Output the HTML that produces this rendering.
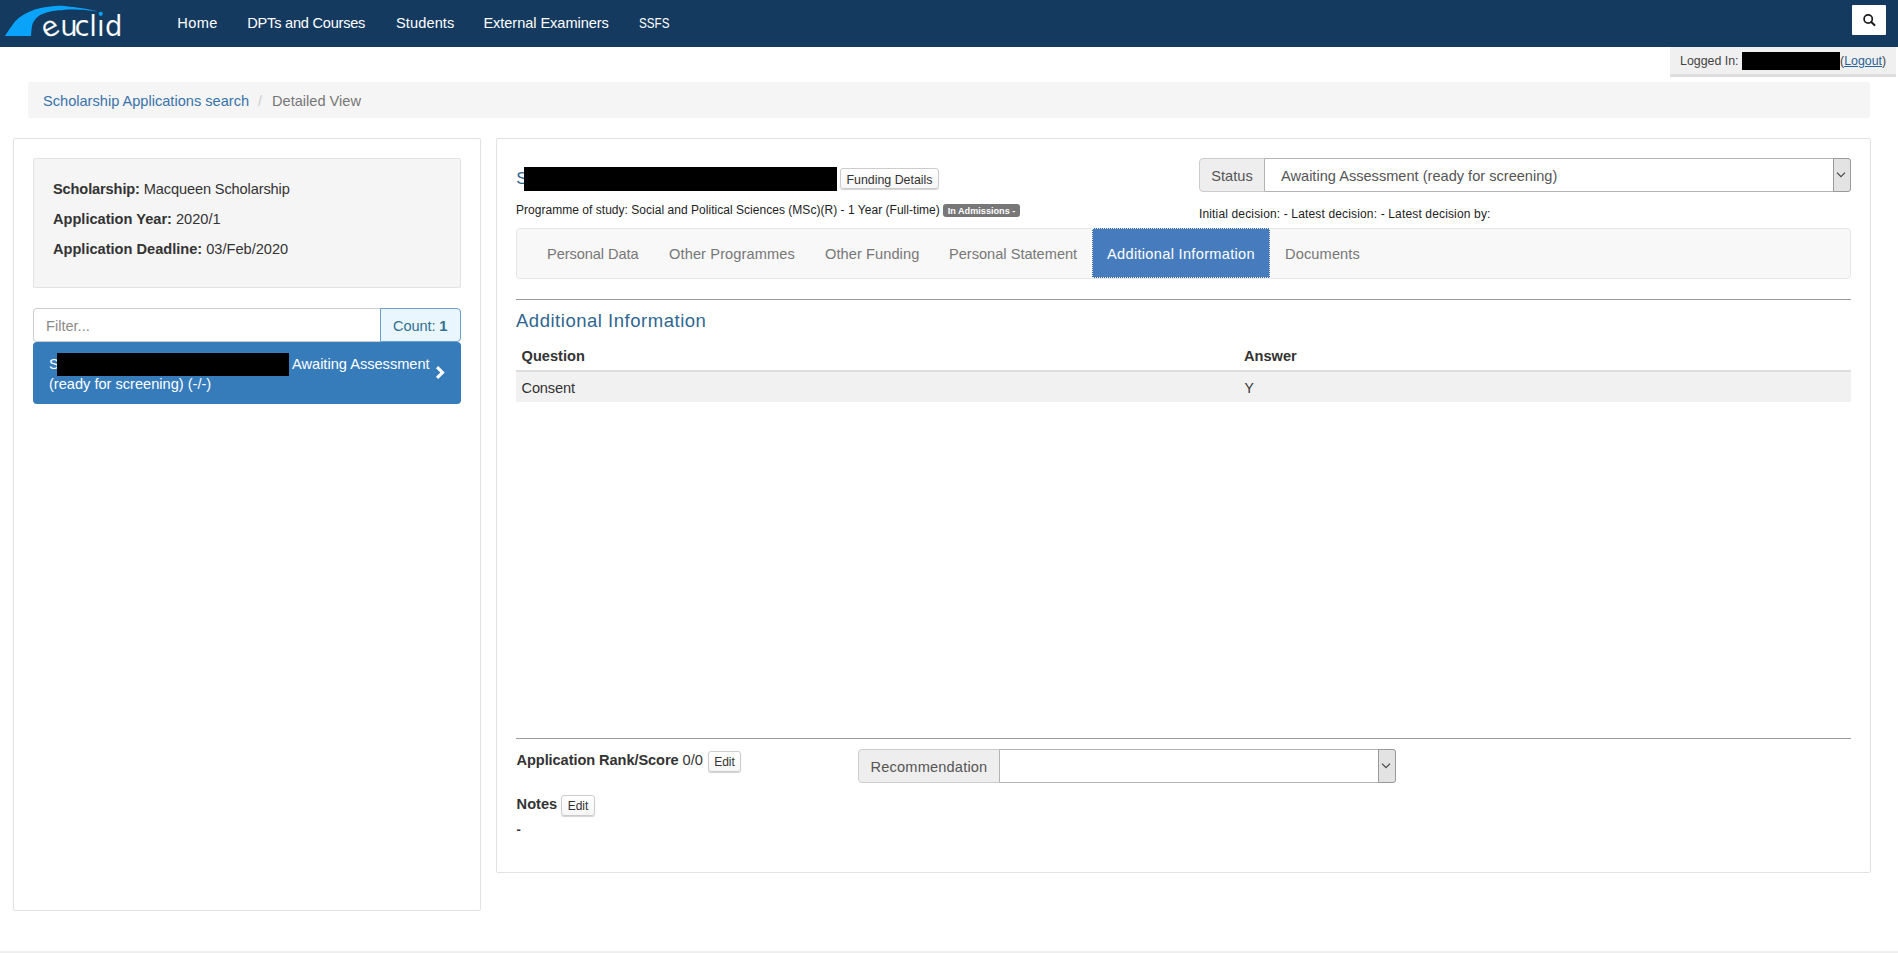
<!DOCTYPE html>
<html lang="en">
<head>
<meta charset="utf-8">
<title>Scholarship Applications - Detailed View</title>
<style>
*{box-sizing:border-box;margin:0;padding:0}
html,body{width:1898px;height:953px;overflow:hidden;background:#fff}
body{font-family:"Liberation Sans",Arial,sans-serif;font-size:14px;color:#333;position:relative}
.abs{position:absolute;white-space:nowrap}
.t{position:absolute;white-space:nowrap;line-height:20px}
b{font-weight:bold}
/* navbar */
#nav{left:0;top:0;width:1898px;height:47px;background:#153a5f}
.nl{color:#fff;font-size:14.6px;top:13px}
#srch{left:1852px;top:5px;width:34px;height:30px;background:#fff;border-radius:1px}
/* logged in */
#logbox{left:1670px;top:47px;width:226px;height:30px;background:#f0f0f0;border-bottom:3px solid #dedede}
/* breadcrumb */
#crumb{left:28px;top:82px;width:1842px;height:35.5px;background:#f5f5f5;border-radius:2px}
/* panels */
#lpanel{left:13px;top:138px;width:468px;height:773px;border:1px solid #e2e2e2;border-radius:2px;background:#fff}
#rpanel{left:496px;top:138px;width:1375px;height:735px;border:1px solid #e2e2e2;border-radius:2px;background:#fff}
#well{left:33px;top:158px;width:428px;height:130px;background:#f5f5f5;border:1px solid #e3e3e3;border-radius:2px}
#filter{left:33px;top:308px;width:348px;height:34px;border:1px solid #ccc;border-radius:4px 0 0 4px;background:#fff}
#count{left:380px;top:308px;width:81px;height:34px;border:1px solid #6a9fd0;border-radius:0 4px 4px 0;background:#eaf6fd}
#item{left:33px;top:341.5px;width:428px;height:62.5px;background:#367bba;border-radius:4px}
.black{background:#000}
.btnx{border:1px solid #ccc;border-radius:3px;background:linear-gradient(#fff,#f6f6f6);box-shadow:0 1px 1px rgba(0,0,0,.18);font-size:12px;color:#333;text-align:center}
.addon{background:#eee;border:1px solid #ccc;border-radius:4px 0 0 4px;color:#555;text-align:center}
.sel{background:#fff;border:1px solid #b4b4b4;border-radius:0 4px 4px 0}
.arrow{background:#e3e3e3;border:1px solid #999;border-radius:0 3px 3px 0}
#tabs{left:516px;top:228px;width:1335px;height:51px;background:#f8f8f8;border:1px solid #e7e7e7;border-radius:4px}
.tab{color:#777;font-size:14.6px;top:244px}
#act{left:1092px;top:228px;width:178px;height:50px;background:#467cbd;outline:1px dotted #e8f0fa;outline-offset:-1px;border:1px solid #3a66a0}
.hr{height:1px;background:#9b9b9b;left:516px;width:1335px}
</style>
</head>
<body>
<!-- NAVBAR -->
<div class="abs" id="nav"></div>
<svg class="abs" style="left:0;top:0" width="140" height="47" viewBox="0 0 140 47">
  <path d="M5.00 35.90 C5.92 34.53 8.53 30.40 10.50 27.70 C12.47 25.00 14.35 22.02 16.80 19.70 C19.25 17.38 22.40 15.40 25.20 13.80 C28.00 12.20 30.80 11.10 33.60 10.10 C36.40 9.10 38.85 8.45 42.00 7.80 C45.15 7.15 49.50 6.55 52.50 6.20 C55.50 5.85 57.33 5.67 60.00 5.70 C62.67 5.73 66.00 6.15 68.50 6.40 C71.00 6.65 72.72 6.90 75.00 7.20 C77.28 7.50 79.87 7.82 82.20 8.20 C84.53 8.58 86.72 9.05 89.00 9.50 C91.28 9.95 94.35 10.53 95.90 10.90 C97.45 11.27 97.90 11.57 98.30 11.70 L98.30 11.70 C96.75 11.52 91.72 10.92 89.00 10.60 C86.28 10.28 84.28 10.00 82.00 9.80 C79.72 9.60 77.63 9.43 75.30 9.40 C72.97 9.37 69.88 9.52 68.00 9.60 C66.12 9.68 65.55 9.78 64.00 9.90 C62.45 10.02 60.97 10.03 58.70 10.30 C56.43 10.57 53.18 10.83 50.40 11.50 C47.62 12.17 44.10 13.42 42.00 14.30 C39.90 15.18 39.20 15.55 37.80 16.80 C36.40 18.05 34.58 20.12 33.60 21.80 C32.62 23.48 32.32 24.55 31.90 26.90 C31.47 29.25 31.19 34.40 31.05 35.90 Z" fill="#0aa3fa"/>
  <text font-family="DejaVu Sans, Liberation Sans, sans-serif" font-size="27.5" fill="#fff" stroke="#153a5f" stroke-width="0.15" x="46.6 60.2 74.6 89.2 96.9 104.9" y="39.2 35.9 35.9 35.9 35.9 35.9" rotate="-28 0 0 0 0 0">euclid</text>
  <rect x="97.6" y="11.5" width="6.4" height="7.4" fill="#153a5f"/>
  <circle cx="100.7" cy="13.8" r="2.15" fill="#0aa3fa"/>
</svg>
<span class="t nl" id="n0" style="letter-spacing:0.36px;left:177.3px">Home</span>
<span class="t nl" id="n1" style="letter-spacing:-0.24px;left:247.3px">DPTs and Courses</span>
<span class="t nl" id="n2" style="letter-spacing:0.1px;left:396px">Students</span>
<span class="t nl" id="n3" style="letter-spacing:-0.06px;left:483.4px">External Examiners</span>
<span class="t nl" id="n4" style="transform:scaleX(0.8);transform-origin:0 50%;left:639px">SSFS</span>
<div class="abs" id="srch">
  <svg width="34" height="30" viewBox="0 0 34 30" style="position:absolute;left:0;top:0"><circle cx="16.2" cy="14" r="4.1" fill="none" stroke="#1c1c1c" stroke-width="1.7"/><path d="M19.2 17 L22.5 20.1" stroke="#1c1c1c" stroke-width="2" stroke-linecap="round"/></svg>
</div>

<!-- LOGGED IN -->
<div class="abs" id="logbox"></div>
<span class="t" style="left:1680px;top:51px;font-size:12.4px;color:#444">Logged In:</span>
<div class="abs black" style="left:1742px;top:52px;width:98px;height:18px"></div>
<span class="t" style="left:1840px;top:51px;font-size:12.4px;color:#444">(<span style="color:#2a6496;text-decoration:underline">Logout</span>)</span>

<!-- BREADCRUMB -->
<div class="abs" id="crumb"></div>
<span class="t" id="bc1" style="left:43px;top:91px;font-size:14.6px;color:#3873ab">Scholarship Applications search</span>
<span class="t" style="left:258px;top:91px;font-size:14.6px;color:#ccc">/</span>
<span class="t" id="bc2" style="left:272px;top:91px;font-size:14.6px;color:#777">Detailed View</span>

<!-- LEFT PANEL -->
<div class="abs" id="lpanel"></div>
<div class="abs" id="well"></div>
<span class="t" id="w1" style="letter-spacing:-0.13px;left:53px;top:179px;font-size:14.6px"><b>Scholarship:</b> Macqueen Scholarship</span>
<span class="t" id="w2" style="left:53px;top:209px;font-size:14.6px"><b>Application Year:</b> 2020/1</span>
<span class="t" id="w3" style="left:53px;top:239px;font-size:14.6px"><b>Application Deadline:</b> 03/Feb/2020</span>
<div class="abs" id="filter"></div>
<span class="t" id="flt" style="left:46px;top:316px;font-size:14.6px;color:#8a8a8a">Filter...</span>
<div class="abs" id="count"></div>
<span class="t" id="cnt" style="letter-spacing:-0.1px;left:393px;top:316px;font-size:14.6px;color:#31708f">Count: <b>1</b></span>
<div class="abs" id="item"></div>
<span class="t" style="left:49px;top:354px;font-size:14.6px;color:#fff">S</span>
<div class="abs black" style="left:57px;top:353px;width:232px;height:23px"></div>
<span class="t" id="aw" style="left:292px;top:354px;font-size:14.6px;color:#fff">Awaiting Assessment</span>
<span class="t" id="rs" style="left:49px;top:374px;font-size:14.6px;color:#fff">(ready for screening) (-/-)</span>
<svg class="abs" style="left:430px;top:360px" width="20" height="24" viewBox="430 360 20 24"><path d="M438.2 366 L444.7 372.5 L438.2 379 L436 376.8 L440.3 372.5 L436 368.2 Z" fill="#fff"/></svg>

<!-- RIGHT PANEL -->
<div class="abs" id="rpanel"></div>
<span class="t" id="hs" style="left:516.3px;top:167px;font-size:17px;line-height:24px;color:#2f6690">S</span>
<div class="abs black" style="left:524px;top:167px;width:313px;height:24px"></div>
<div class="abs btnx" style="left:840px;top:168px;width:99px;height:21px;line-height:22px;font-size:12.4px" id="fd">Funding Details</div>
<span class="t" id="prog" style="letter-spacing:0.03px;left:516px;top:200px;font-size:12px;color:#222">Programme of study: Social and Political Sciences (MSc)(R) - 1 Year (Full-time)</span>
<div class="abs" id="badge" style="left:943px;top:204px;width:77px;height:13px;background:#777;border-radius:3px;color:#fff;font-size:9.1px;font-weight:bold;line-height:14px;text-align:center;letter-spacing:0.02px">In Admissions -</div>

<div class="abs addon" style="left:1199px;top:158px;width:66px;height:34px;line-height:34px;font-size:14.6px" id="st">Status</div>
<div class="abs sel" style="left:1264px;top:158px;width:587px;height:34px"></div>
<span class="t" id="stv" style="left:1281px;top:166px;font-size:14.6px;color:#555">Awaiting Assessment (ready for screening)</span>
<div class="abs arrow" style="left:1833px;top:158px;width:18px;height:34px"></div>
<svg class="abs" style="left:1835px;top:170px" width="12" height="10" viewBox="0 0 12 10"><path d="M2 2.6 L6 6.7 L10 2.6" fill="none" stroke="#444" stroke-width="1.15"/></svg>
<span class="t" id="dec" style="letter-spacing:0.15px;left:1199px;top:204px;font-size:12px;color:#222">Initial decision: - Latest decision: - Latest decision by:</span>

<div class="abs" id="tabs"></div>
<span class="t tab" id="t1" style="letter-spacing:-0.07px;left:547px">Personal Data</span>
<span class="t tab" id="t2" style="letter-spacing:0.12px;left:669px">Other Programmes</span>
<span class="t tab" id="t3" style="letter-spacing:0.08px;left:825px">Other Funding</span>
<span class="t tab" id="t4" style="left:949px">Personal Statement</span>
<div class="abs" id="act"></div>
<span class="t tab" id="t5" style="letter-spacing:0.31px;left:1107px;color:#fff">Additional Information</span>
<span class="t tab" id="t6" style="letter-spacing:0.13px;left:1285px">Documents</span>

<div class="abs hr" style="top:299px"></div>
<span class="t" id="h4" style="letter-spacing:0.52px;left:516px;top:309px;font-size:18.5px;line-height:24px;color:#2f6690">Additional Information</span>
<span class="t" style="left:521.6px;top:346px;font-size:14.6px;font-weight:bold">Question</span>
<span class="t" style="left:1244px;top:346px;font-size:14.6px;font-weight:bold">Answer</span>
<div class="abs" style="left:516px;top:370px;width:1335px;height:2px;background:#ddd"></div>
<div class="abs" style="left:516px;top:372px;width:1335px;height:30px;background:#f1f1f1"></div>
<span class="t" style="left:521.5px;top:378px;font-size:14.6px;letter-spacing:-0.15px">Consent</span>
<span class="t" style="left:1244.4px;top:378px;font-size:14px">Y</span>

<div class="abs hr" style="top:738px"></div>
<span class="t" id="rank" style="left:516.5px;top:750px;font-size:14.6px"><b style="letter-spacing:-0.08px">Application Rank/Score</b> 0/0</span>
<div class="abs btnx" style="left:708px;top:751px;width:33px;height:21px;line-height:20px">Edit</div>
<div class="abs addon" style="left:858px;top:749px;width:142px;height:34px;line-height:34px;font-size:14.6px" id="rec"><span style="letter-spacing:0.17px">Recommendation</span></div>
<div class="abs sel" style="left:999px;top:749px;width:397px;height:34px"></div>
<div class="abs arrow" style="left:1378px;top:749px;width:18px;height:34px"></div>
<svg class="abs" style="left:1380px;top:761px" width="12" height="10" viewBox="0 0 12 10"><path d="M2 2.6 L6 6.7 L10 2.6" fill="none" stroke="#444" stroke-width="1.15"/></svg>
<span class="t" id="notes" style="left:516.6px;top:794px;font-size:14.6px"><b>Notes</b></span>
<div class="abs btnx" style="left:561px;top:795px;width:34px;height:21px;line-height:20px">Edit</div>
<span class="t" id="dash" style="left:516.6px;top:820px;font-size:13px;font-weight:bold;color:#333">-</span>

<div class="abs" style="left:0;top:951px;width:1898px;height:2px;background:#eee"></div>
</body>
</html>
